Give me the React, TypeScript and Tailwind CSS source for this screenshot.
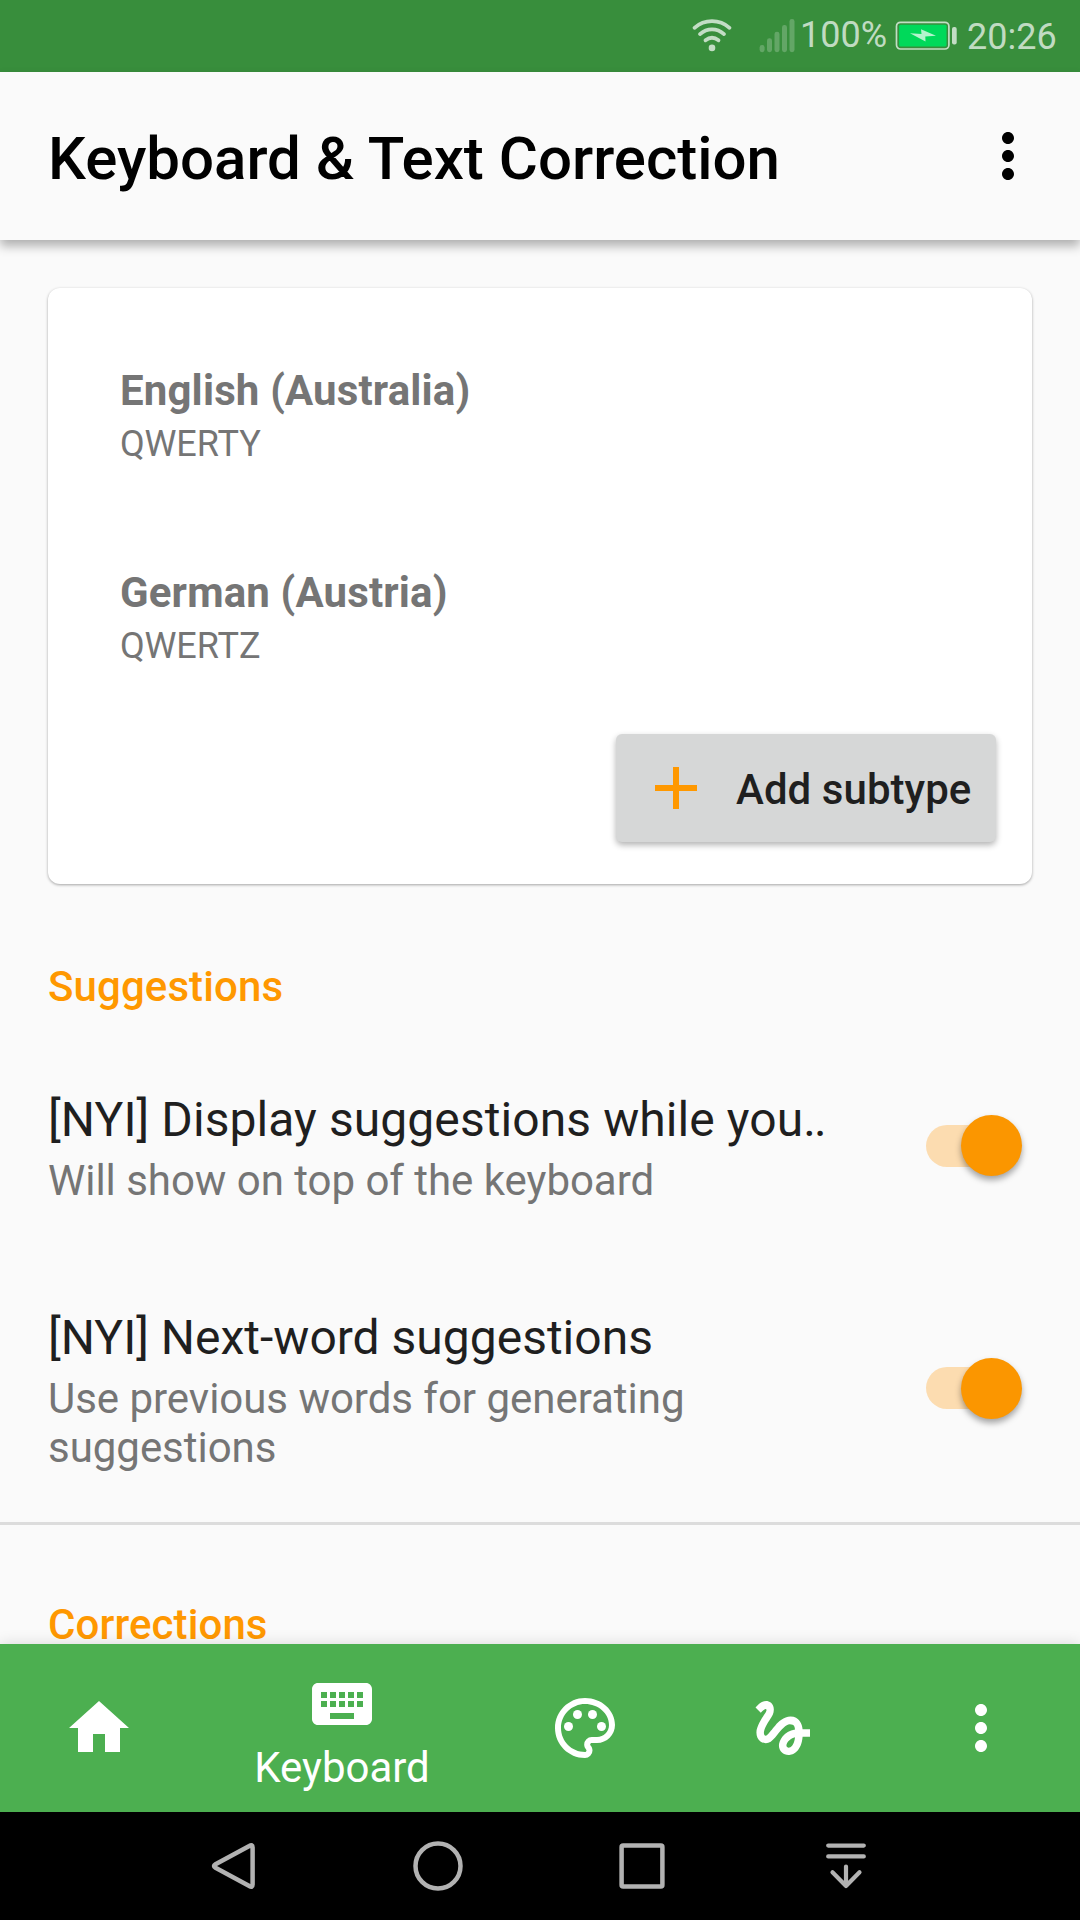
import React from "react";
import { MdHome, MdKeyboard, MdOutlinePalette, MdGesture, MdMoreVert } from "react-icons/md";

function StatusBar() {
  return (
    <header className="flex h-[72px] shrink-0 items-start bg-[#388e3c] pl-[690px] text-[36px] leading-[42px] text-white/70">
      <svg className="mt-[14px] h-[42px] w-[44px] shrink-0" viewBox="0 0 44 42" fill="none" stroke="currentColor" strokeWidth="3.8">
        <path d="M4.500 13.800C14.500 4.900 29.500 4.900 39.500 13.800" strokeLinecap="round" />
        <path d="M10 20.100C17 13.800 27 13.800 34 20.100" strokeLinecap="round" />
        <path d="M15.500 26.300C19.500 23.200 24.500 23.200 28.500 26.300" strokeLinecap="round" />
        <circle cx="22" cy="33.900" r="3.300" fill="currentColor" stroke="none" />
      </svg>
      <svg className="mt-[14px] ml-[24px] h-[42px] w-[40px] shrink-0" viewBox="0 0 40 42" fill="#fff" fillOpacity="0.22">
        <rect x="1.600" y="31" width="5" height="7.200" rx="2.400" />
        <rect x="9" y="24.200" width="5" height="14" rx="2.400" />
        <rect x="16.500" y="17.700" width="5" height="20.500" rx="2.400" />
        <rect x="24" y="11" width="5" height="27.200" rx="2.400" />
        <rect x="31.500" y="5" width="5" height="33.200" rx="2.400" />
      </svg>
      <span className="mt-[14px] ml-[2px] w-[94px]">100%</span>
      <svg className="mt-[14px] h-[42px] w-[68px] shrink-0" viewBox="0 0 68 42">
        <rect x="2.500" y="8.300" width="52.400" height="26.700" rx="4" fill="none" stroke="currentColor" strokeWidth="1.700" />
        <rect x="5.100" y="10.700" width="47.400" height="21.700" rx="1.500" fill="#00d95a" />
        <rect x="58" y="13" width="4.700" height="17.400" rx="2" fill="currentColor" />
        <path d="M16 19.300L27.500 20L27 15.300L42 21.800L31.300 22.500L31.500 27.500Z" fill="#fff" fillOpacity="0.700" />
      </svg>
      <span className="mt-[16px] ml-[5px]">20:26</span>
    </header>
  );
}

function AppBar() {
  return (
    <div className="relative z-10 flex h-[168px] shrink-0 items-start justify-between bg-[#fafafa] pr-[36px] pl-[48px] shadow-[0_6px_10px_rgba(0,0,0,0.3)]">
      <h1 className="mt-[51px] text-[60px] leading-[71px] font-medium text-black">Keyboard &amp; Text Correction</h1>
      <MdMoreVert className="mt-[48px] size-[72px] text-black" />
    </div>
  );
}

function Subtype({ name, layout }: { name: string; layout: string }) {
  return (
    <div className="flex flex-col gap-[8px] px-[72px] text-[#757575]">
      <div className="text-[42px] leading-[49px] font-bold tracking-[0.15px]">{name}</div>
      <div className="text-[36px] leading-[42px]">{layout}</div>
    </div>
  );
}

function SubtypeCard() {
  return (
    <section className="mx-[48px] mt-[48px] flex h-[596px] shrink-0 flex-col gap-[103px] rounded-[12px] bg-white pt-[78px] shadow-[0_1px_3px_rgba(0,0,0,0.35)]">
      <Subtype name="English (Australia)" layout="QWERTY" />
      <Subtype name="German (Austria)" layout="QWERTZ" />
      <button className="-mt-[36px] mr-[36px] flex h-[108px] w-[380px] items-start self-end rounded-[6px] bg-[#d6d7d7] pl-[24px] shadow-[0_3px_6px_rgba(0,0,0,0.3)]">
        <svg className="mt-[18px] size-[72px]" viewBox="0 0 24 24" fill="#ff9800">
          <path d="M19 13h-6v6h-2v-6H5v-2h6V5h2v6h6v2z" />
        </svg>
        <span className="mt-[31px] ml-[24px] text-[42px] leading-[49px] font-medium tracking-[0.05px] text-[#1f1f1f]">Add subtype</span>
      </button>
    </section>
  );
}

function Toggle() {
  return (
    <div className="mb-[5px] flex h-[61px] w-[96px] items-center rounded-full">
      <div className="h-[42px] w-[80px] rounded-full bg-[#fcdcb0]" />
      <div className="-ml-[45px] size-[61px] shrink-0 rounded-full bg-[#fb9600] shadow-[0_4px_6px_rgba(0,0,0,0.35)]" />
    </div>
  );
}

function Preference({ title, summary }: { title: React.ReactNode; summary: string }) {
  return (
    <div className="flex items-center justify-between pr-[58px] pl-[48px]">
      <div className="w-[780px]">
        <div className="text-[48px] leading-[57px] whitespace-nowrap text-[#1f1f1f]">{title}</div>
        <div className="mt-[8px] w-[700px] text-[42px] leading-[49px] tracking-[-0.03px] text-[#757575]">{summary}</div>
      </div>
      <Toggle />
    </div>
  );
}

function BottomNav() {
  return (
    <nav className="relative z-10 flex h-[168px] shrink-0 bg-[#4caf50] text-white shadow-[0_0_14px_rgba(0,0,0,0.14)]">
      <div className="flex w-[198px] items-center justify-center"><MdHome className="size-[72px]" /></div>
      <div className="flex w-[288px] flex-col items-center pt-[24px]">
        <MdKeyboard className="size-[72px]" />
        <span className="mt-[3px] text-[42px] leading-[49px]">Keyboard</span>
      </div>
      <div className="flex w-[198px] items-center justify-center"><MdOutlinePalette className="size-[72px]" /></div>
      <div className="flex w-[198px] items-center justify-center"><MdGesture className="size-[72px]" /></div>
      <div className="flex w-[198px] items-center justify-center"><MdMoreVert className="size-[72px]" /></div>
    </nav>
  );
}

function SystemNav() {
  const icons = [
    <path key="back" d="M50.600 13.500V50.500Q50.600 54 47.300 52L13.500 33.800Q10.500 32 13.500 30.200L47.300 12Q50.600 10 50.600 13.500Z" />,
    <circle key="home" cx="32" cy="32" r="22.500" />,
    <rect key="recent" x="11.600" y="11.600" width="40.800" height="40.800" rx="1.500" />,
    <path key="hide" strokeWidth="4.200" d="M14.200 11.600H49.800M14.200 22.400H49.800M32 32.500V52M18.500 38.200L32 52L45.500 38.200" />,
  ];
  return (
    <footer className="flex h-[108px] shrink-0 items-center bg-black px-[132px]">
      {icons.map((icon, i) => (
        <div key={i} className="flex w-[204px] justify-center">
          <svg className="size-[64px]" viewBox="0 0 64 64" fill="none" stroke="#b2b2b2" strokeWidth="4.500" strokeLinecap="round" strokeLinejoin="round">
            {icon}
          </svg>
        </div>
      ))}
    </footer>
  );
}

export default function App() {
  return (
    <div className="flex h-[1920px] w-[1080px] flex-col overflow-hidden bg-[#fafafa] font-['Roboto',sans-serif]">
      <StatusBar />
      <AppBar />
      <main className="flex h-[1404px] shrink-0 flex-col">
        <SubtypeCard />
        <h2 className="mt-[78px] ml-[48px] text-[42px] leading-[49px] font-medium tracking-[0.1px] text-[#ff9800]">Suggestions</h2>
        <div className="mt-[80px]">
          <Preference
            title={
              <>
                <span className="tracking-[0.08px]">[NYI] Display suggestions while you</span>
                <span className="tracking-[-2px]">..</span>
              </>
            }
            summary="Will show on top of the keyboard"
          />
        </div>
        <div className="mt-[104px]">
          <Preference title="[NYI] Next-word suggestions" summary="Use previous words for generating suggestions" />
        </div>
        <hr className="mt-[50px] h-[3px] shrink-0 border-0 bg-[#dcdcdc]" />
        <h2 className="mt-[80px] ml-[48px] text-[42px] leading-[39px] font-medium tracking-[0.1px] text-[#ff9800]">Corrections</h2>
      </main>
      <BottomNav />
      <SystemNav />
    </div>
  );
}
